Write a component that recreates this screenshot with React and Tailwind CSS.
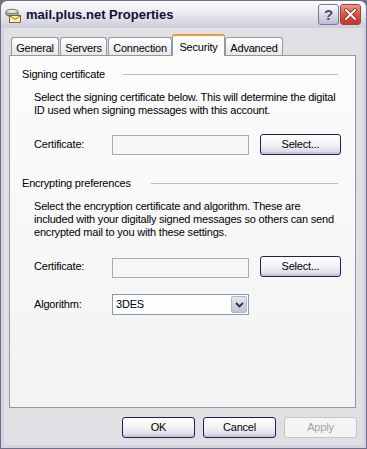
import React from "react";

const font = "font-['Liberation_Sans','Arial',sans-serif]";

function TitleIcon() {
  return (
    <svg width="16" height="16" viewBox="0 0 16 16">
      <ellipse cx="7" cy="7" rx="6" ry="2.2" fill="#9aa79a" stroke="#4d5a4d" strokeWidth="0.8" />
      <path d="M1 4.5 v2.5 a6 2.2 0 0 0 12 0 v-2.5" fill="#b7c2b5" stroke="#4d5a4d" strokeWidth="0.8" />
      <ellipse cx="7" cy="4.5" rx="6" ry="2.2" fill="#dfe6dc" stroke="#4d5a4d" strokeWidth="0.8" />
      <rect x="4.5" y="8.5" width="11" height="7" fill="#fbf2a8" stroke="#6b5a1e" strokeWidth="0.9" />
      <path d="M4.5 8.5 L10 12.5 L15.5 8.5" fill="none" stroke="#6b5a1e" strokeWidth="0.9" />
    </svg>
  );
}

function XpButton({ children, className = "", disabled = false }) {
  return (
    <div
      className={`shrink-0 flex items-center justify-center rounded-[3px] border ${
        disabled
          ? "border-[#c6c5c9] text-[#a2a1a6] bg-[#f4f4f4]"
          : "border-[#20205c] text-black bg-gradient-to-b from-[#ffffff] via-[#f3f3f6] to-[#d5d5e1] shadow-[inset_0_-2px_0_#c6c6d6]"
      } ${className}`}
    >
      {children}
    </div>
  );
}

function GroupHeader({ label, labelWidth }) {
  return (
    <div className="flex items-center h-[13px]">
      <span className="shrink-0" style={{ width: labelWidth }}>{label}</span>
      <div className="flex-1 h-px bg-[#b9b9c2]" />
    </div>
  );
}

function Tab({ label, width, selected, className = "" }) {
  if (selected) {
    return (
      <div
        className={`relative z-10 -mb-px h-[22px] flex justify-center pt-[3px] rounded-t-[3px] border-x border-t-[2px] border-x-[#919b9c] border-t-[#eb9a3c] bg-[#fbfbfc] ${className}`}
        style={{ width }}
      >
        {label}
      </div>
    );
  }
  return (
    <div
      className={`h-[18px] flex justify-center pt-[2px] rounded-t-[3px] border-x border-t border-[#919b9c] bg-gradient-to-b from-[#ffffff] to-[#e7e7ec] ${className}`}
      style={{ width }}
    >
      {label}
    </div>
  );
}

export default function App() {
  return (
    <div className={`w-[367px] h-[449px] flex flex-col text-[11px] tracking-[-0.2px] text-black bg-[#6e6e8e] ${font}`}>
      {/* title bar */}
      <div className="h-[28px] shrink-0 rounded-t-[7px] border-x border-t border-[#6e6e8e] bg-gradient-to-b from-[#fdfdfe] via-[#e7e7ef] to-[#cdcdda] flex items-center pl-[4px] pr-[5px]">
        <TitleIcon />
        <span className="ml-[5px] text-[13px] font-bold tracking-normal text-[#111130]">mail.plus.net Properties</span>
        <div className="flex-1" />
        <div className="w-[21px] h-[21px] rounded-[3px] border border-[#76769a] bg-gradient-to-b from-[#fbfbfd] to-[#bebed2] flex items-center justify-center">
          <span className="text-[15px] font-bold text-[#4b4b66] leading-none">?</span>
        </div>
        <div className="ml-px w-[21px] h-[21px] rounded-[3px] border border-[#a04040] bg-gradient-to-b from-[#ee9a88] via-[#d9543e] to-[#c33a2b] flex items-center justify-center">
          <svg width="13" height="13" viewBox="0 0 13 13">
            <path d="M2 2 L11 11 M11 2 L2 11" stroke="#7a2418" strokeWidth="3.6" strokeLinecap="square" />
            <path d="M2 2 L11 11 M11 2 L2 11" stroke="#ffffff" strokeWidth="2" strokeLinecap="square" />
          </svg>
        </div>
      </div>

      {/* body */}
      <div className="flex-1 border-x border-b border-[#6e6e8e] flex flex-col">
        <div className="flex-1 border-x-[3px] border-b-[3px] border-[#d4d4de] bg-[#e0dfe3] flex flex-col pl-[5px] pr-[7px]">
          <div className="flex items-end h-[27px] ml-[2px]">
            <Tab label="General" width={48} />
            <Tab label="Servers" width={47} className="ml-px" />
            <Tab label="Connection" width={64} className="ml-px" />
            <Tab label="Security" width={53} selected />
            <Tab label="Advanced" width={58} />
          </div>

          <div className="h-[353px] border border-[#919b9c] bg-gradient-to-b from-[#fcfcfc] to-[#f3f3f3] pt-[12px] pl-[12px]">
            <div className="w-[316px]">
              <GroupHeader label="Signing certificate" labelWidth={101} />
            </div>
            <p className="mt-[10px] ml-[12px] leading-[13px] whitespace-nowrap">
              Select the signing certificate below. This will determine the digital
              <br />
              ID used when signing messages with this account.
            </p>
            <div className="mt-[17px] ml-[12px] flex items-center h-[21px]">
              <span className="w-[78px] shrink-0">Certificate:</span>
              <div className="shrink-0 w-[137px] h-[20px] mt-[1px] border border-[#a5acb2] bg-[#f6f6f6]" />
              <XpButton className="ml-[11px] w-[81px] h-[21px]">Select...</XpButton>
            </div>

            <div className="mt-[22px] w-[316px]">
              <GroupHeader label="Encrypting preferences" labelWidth={129} />
            </div>
            <p className="mt-[10px] ml-[12px] leading-[13px] whitespace-nowrap">
              Select the encryption certificate and algorithm. These are
              <br />
              included with your digitally signed messages so others can send
              <br />
              encrypted mail to you with these settings.
            </p>
            <div className="mt-[17px] ml-[12px] flex items-center h-[21px]">
              <span className="w-[78px] shrink-0">Certificate:</span>
              <div className="shrink-0 w-[137px] h-[20px] mt-[2px] border border-[#a5acb2] bg-[#f6f6f6]" />
              <XpButton className="ml-[11px] w-[81px] h-[21px]">Select...</XpButton>
            </div>

            <div className="mt-[17px] ml-[12px] flex items-center h-[21px]">
              <span className="w-[78px] shrink-0">Algorithm:</span>
              <div className="shrink-0 w-[137px] h-[21px] border border-[#7f9db9] bg-white flex items-center">
                <span className="pl-[3px] flex-1">3DES</span>
                <div className="w-[16px] h-[17px] mr-px rounded-[2px] border border-[#b4b4c8] bg-gradient-to-b from-[#e6e6ee] to-[#c2c2d2] flex items-center justify-center">
                  <svg width="9" height="6" viewBox="0 0 9 6">
                    <path d="M1 1 L4.5 4.5 L8 1" fill="none" stroke="#2c2c46" strokeWidth="1.8" />
                  </svg>
                </div>
              </div>
            </div>
          </div>

          <div className="mt-[9px] -mr-px flex justify-end gap-[8px]">
            <XpButton className="w-[73px] h-[21px]">OK</XpButton>
            <XpButton className="w-[73px] h-[21px]">Cancel</XpButton>
            <XpButton className="w-[73px] h-[21px]" disabled>Apply</XpButton>
          </div>
        </div>
      </div>
    </div>
  );
}
